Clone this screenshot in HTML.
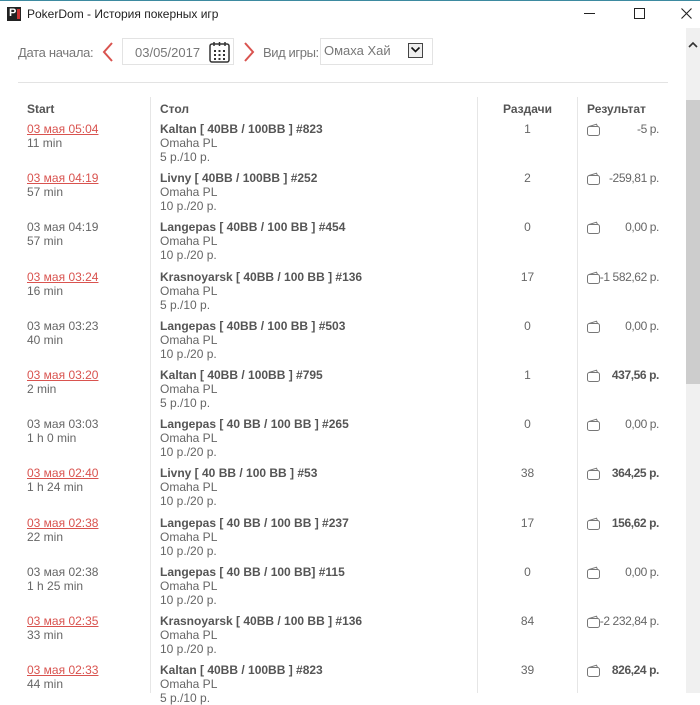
<!DOCTYPE html>
<html><head><meta charset="utf-8"><style>
body{margin:0;width:700px;height:693px;overflow:hidden;background:#fff;font-family:"Liberation Sans","Noto Sans CJK SC",sans-serif;position:relative}
.tb{position:absolute;left:0;top:0;width:700px;height:28px;border-top:1px solid #3d8aa0;box-sizing:border-box}
.abs{position:absolute}
.t{font-size:12px;color:#666;white-space:nowrap}
.b{font-weight:bold;color:#555}
.r{color:#d9534f;text-decoration:underline}
.vl{position:absolute;width:1px;background:#e6e6e6}
svg{position:absolute}
</style></head><body>
<div class="tb"></div>
<div class="abs" style="left:7px;top:7px;width:14px;height:14px;background:#222"><span style="position:absolute;left:2px;top:0;color:#fff;font:bold 11px 'Liberation Sans';">P</span><span style="position:absolute;right:1px;top:2px;width:3px;height:10px;background:#c33"></span></div>
<div class="abs t" style="left:27px;top:7px;color:#222;font-size:12px">PokerDom - История покерных игр</div>
<div class="abs" style="left:584px;top:13px;width:11px;height:1px;background:#222"></div>
<div class="abs" style="left:634px;top:8px;width:9px;height:9px;border:1px solid #222"></div>
<svg style="left:681px;top:8px" width="11" height="11"><path d="M0.5 0.5L10.5 10.5M10.5 0.5L0.5 10.5" stroke="#222" stroke-width="1.1"/></svg>
<div class="abs t" style="left:18px;top:45px;font-size:13px;color:#777;letter-spacing:-0.3px">Дата начала:</div>
<svg style="left:102px;top:42px" width="12" height="20"><path d="M10 1L2 10L10 19" fill="none" stroke="#d9534f" stroke-width="2"/></svg>
<div class="abs" style="left:122px;top:38px;width:112px;height:27px;border:1px solid #e3e3e3;box-sizing:border-box"></div>
<div class="abs t" style="left:135px;top:45px;font-size:13px;color:#777">03/05/2017</div>
<svg style="left:209px;top:41px" width="21" height="22"><rect x="1" y="3" width="19" height="18" rx="2" fill="none" stroke="#333" stroke-width="1.5"/><path d="M5 1v4M10.5 1v4M16 1v4" stroke="#333" stroke-width="1.5"/><g fill="#333"><rect x="5" y="9" width="2" height="2"/><rect x="9.5" y="9" width="2" height="2"/><rect x="14" y="9" width="2" height="2"/><rect x="5" y="13" width="2" height="2"/><rect x="9.5" y="13" width="2" height="2"/><rect x="14" y="13" width="2" height="2"/><rect x="5" y="17" width="2" height="2"/><rect x="9.5" y="17" width="2" height="2"/><rect x="14" y="17" width="2" height="2"/></g></svg>
<svg style="left:243px;top:42px" width="12" height="20"><path d="M2 1L10 10L2 19" fill="none" stroke="#d9534f" stroke-width="2"/></svg>
<div class="abs t" style="left:263px;top:45px;font-size:13px;color:#777;letter-spacing:-0.4px">Вид игры:</div>
<div class="abs" style="left:320px;top:38px;width:113px;height:27px;border:1px solid #e3e3e3;box-sizing:border-box;background:#fff"></div>
<div class="abs t" style="left:324px;top:43px;font-size:13px;color:#777">Омаха Хай</div>
<div class="abs" style="left:408px;top:43px;width:15px;height:15px;border:1px solid #444;background:#eee;box-sizing:border-box"></div>
<svg style="left:410px;top:46px" width="11" height="8"><path d="M1.5 1.5L5.5 5.5L9.5 1.5" fill="none" stroke="#111" stroke-width="1.6"/></svg>
<div class="abs" style="left:18px;top:82px;width:650px;height:1px;background:#e3e3e3"></div>
<div class="abs" style="left:686px;top:28px;width:14px;height:665px;background:#f0f0f0"></div>
<svg style="left:688px;top:41px" width="10" height="7"><path d="M1 6L5 2L9 6" fill="none" stroke="#333" stroke-width="1.6"/></svg>
<div class="abs" style="left:686px;top:100px;width:14px;height:284px;background:#cdcdcd"></div>
<div class="vl" style="left:150px;top:97px;height:596px"></div>
<div class="vl" style="left:477px;top:97px;height:596px"></div>
<div class="vl" style="left:577px;top:97px;height:596px"></div>
<div class="abs t b" style="left:27px;top:102px">Start</div>
<div class="abs t b" style="left:160px;top:102px">Стол</div>
<div class="abs t b" style="left:503px;top:102px">Раздачи</div>
<div class="abs t b" style="left:587px;top:102px">Результат</div>
<div id="rows"></div>
<script>
var d=[
[1,"03 мая 05:04","11 min","Kaltan [ 40BB / 100BB ] #823","5 р./10 р.","1","-5 р.",0],
[1,"03 мая 04:19","57 min","Livny [ 40BB / 100BB ] #252","10 р./20 р.","2","-259,81 р.",0],
[0,"03 мая 04:19","57 min","Langepas [ 40BB / 100 BB ] #454","10 р./20 р.","0","0,00 р.",0],
[1,"03 мая 03:24","16 min","Krasnoyarsk [ 40BB / 100 BB ] #136","5 р./10 р.","17","-1 582,62 р.",0],
[0,"03 мая 03:23","40 min","Langepas [ 40BB / 100 BB ] #503","10 р./20 р.","0","0,00 р.",0],
[1,"03 мая 03:20","2 min","Kaltan [ 40BB / 100BB ] #795","5 р./10 р.","1","437,56 р.",1],
[0,"03 мая 03:03","1 h 0 min","Langepas [ 40 BB / 100 BB ] #265","10 р./20 р.","0","0,00 р.",0],
[1,"03 мая 02:40","1 h 24 min","Livny [ 40 BB / 100 BB ] #53","10 р./20 р.","38","364,25 р.",1],
[1,"03 мая 02:38","22 min","Langepas [ 40 BB / 100 BB ] #237","10 р./20 р.","17","156,62 р.",1],
[0,"03 мая 02:38","1 h 25 min","Langepas [ 40 BB / 100 BB] #115","10 р./20 р.","0","0,00 р.",0],
[1,"03 мая 02:35","33 min","Krasnoyarsk [ 40BB / 100 BB ] #136","10 р./20 р.","84","-2 232,84 р.",0],
[1,"03 мая 02:33","44 min","Kaltan [ 40BB / 100BB ] #823","5 р./10 р.","39","826,24 р.",1]];
var h="";
d.forEach(function(r,i){var y=122+i*49.2;
h+='<div class="abs t'+(r[0]?' r':'')+'" style="left:27px;top:'+y+'px">'+r[1]+'</div>';
h+='<div class="abs t" style="left:27px;top:'+(y+14)+'px">'+r[2]+'</div>';
h+='<div class="abs t b" style="left:160px;top:'+y+'px">'+r[3]+'</div>';
h+='<div class="abs t" style="left:160px;top:'+(y+14)+'px">Omaha PL</div>';
h+='<div class="abs t" style="left:160px;top:'+(y+28)+'px">'+r[4]+'</div>';
h+='<div class="abs t" style="left:478px;width:99px;text-align:center;top:'+y+'px">'+r[5]+'</div>';
h+='<svg style="left:586px;top:'+(y+1)+'px" width="15" height="14"><rect x="1.5" y="3.5" width="12" height="9" rx="2" fill="none" stroke="#777" stroke-width="1"/><path d="M3 3.5L10.5 1.2L11.5 3.5" fill="none" stroke="#777" stroke-width="1"/></svg>';
h+='<div class="abs t'+(r[7]?' b':'')+'" style="right:41px;top:'+y+'px;letter-spacing:-0.4px">'+r[6]+'</div>';});
document.getElementById("rows").innerHTML=h;
</script>
</body></html>
